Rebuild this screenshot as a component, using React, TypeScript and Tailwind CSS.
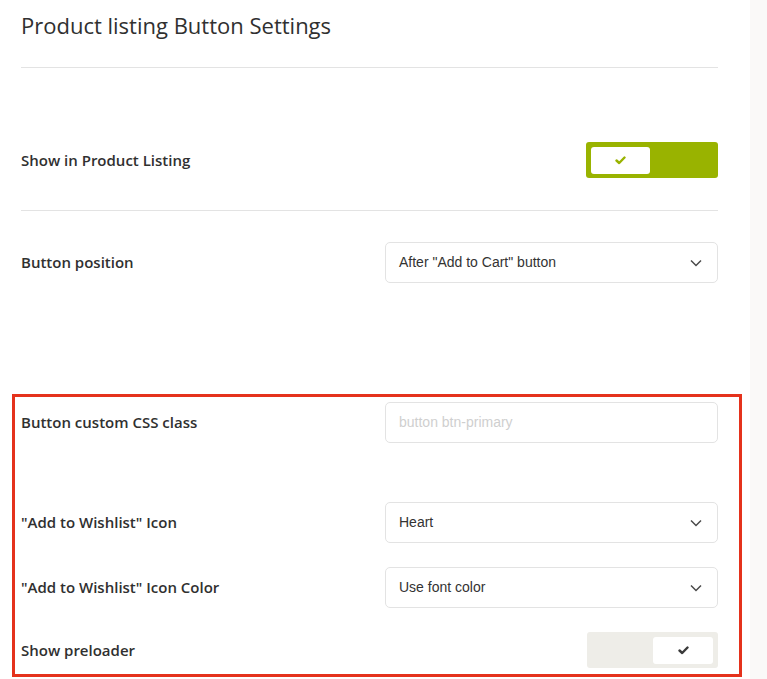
import React from 'react'

const LABEL = "text-[15px] font-semibold text-[#303030] [font-family:'Open_Sans',sans-serif]"
const FIELD = "h-[41px] w-[333px] rounded-[5px] border border-[#e3e3e3] bg-white px-[13px] flex items-center text-[14px] [font-family:'Liberation_Sans',Arial,sans-serif]"

function Chevron() {
  return (
    <svg width="12" height="8" viewBox="0 0 12 8" className="ml-auto mr-[2px]">
      <polyline points="1,1.5 6,6.5 11,1.5" fill="none" stroke="#4a4a4a" strokeWidth="1.5" />
    </svg>
  )
}

function Check({ color }: { color: string }) {
  return (
    <svg width="11" height="9" viewBox="0 0 11 9">
      <polyline points="1.5,4.5 4.2,7 9.5,1.5" fill="none" stroke={color} strokeWidth="2.4" strokeLinecap="round" strokeLinejoin="round" />
    </svg>
  )
}

function Select({ value }: { value: string }) {
  return (
    <div className={FIELD}>
      <span className="text-[#333333]">{value}</span>
      <Chevron />
    </div>
  )
}

function Row({ label, children, className = '' }: { label: string; children: React.ReactNode; className?: string }) {
  return (
    <div className={`flex items-center ${className}`}>
      <div className={`flex-1 ${LABEL}`}>{label}</div>
      {children}
    </div>
  )
}

export default function App() {
  return (
    <div className="flex min-h-[679px] w-full bg-white">
      <div className="relative w-[750px] shrink-0 bg-white pl-[21px] pr-[32px]">
        <h1 className="mt-[10px] h-[30px] leading-[30px] text-[22px] font-normal text-[#303030] [font-family:'Open_Sans',sans-serif]">
          Product listing Button Settings
        </h1>
        <div className="mt-[27px] h-px bg-[#e3e3e3]" />

        <Row label="Show in Product Listing" className="mt-[74px]">
          <div className="flex h-[36px] w-[132px] items-center rounded-[3px] bg-[#99b300] pl-[5px]">
            <div className="flex h-[27px] w-[59px] items-center justify-center rounded-[3px] bg-white">
              <Check color="#99b300" />
            </div>
          </div>
        </Row>

        <div className="mt-[32px] h-px bg-[#e3e3e3]" />

        <Row label="Button position" className="mt-[31px]">
          <Select value={'After "Add to Cart" button'} />
        </Row>

        <Row label="Button custom CSS class" className="mt-[119px]">
          <div className={FIELD}>
            <span className="text-[#cfcfcf]">button btn-primary</span>
          </div>
        </Row>

        <Row label={'"Add to Wishlist" Icon'} className="mt-[59px]">
          <Select value="Heart" />
        </Row>

        <Row label={'"Add to Wishlist" Icon Color'} className="mt-[24px]">
          <Select value="Use font color" />
        </Row>

        <Row label="Show preloader" className="mt-[24px]">
          <div className="flex h-[36px] w-[131px] items-center justify-end rounded-[3px] bg-[#eeede8] pr-[5px]">
            <div className="flex h-[27px] w-[60px] items-center justify-center rounded-[3px] bg-white">
              <Check color="#3a3a3a" />
            </div>
          </div>
        </Row>

        <div className="pointer-events-none absolute left-[12px] top-[394px] h-[283px] w-[730px] border-[3px] border-[#e5321c]" />
      </div>
      <div className="flex-1 bg-[#faf9f8]" />
    </div>
  )
}
